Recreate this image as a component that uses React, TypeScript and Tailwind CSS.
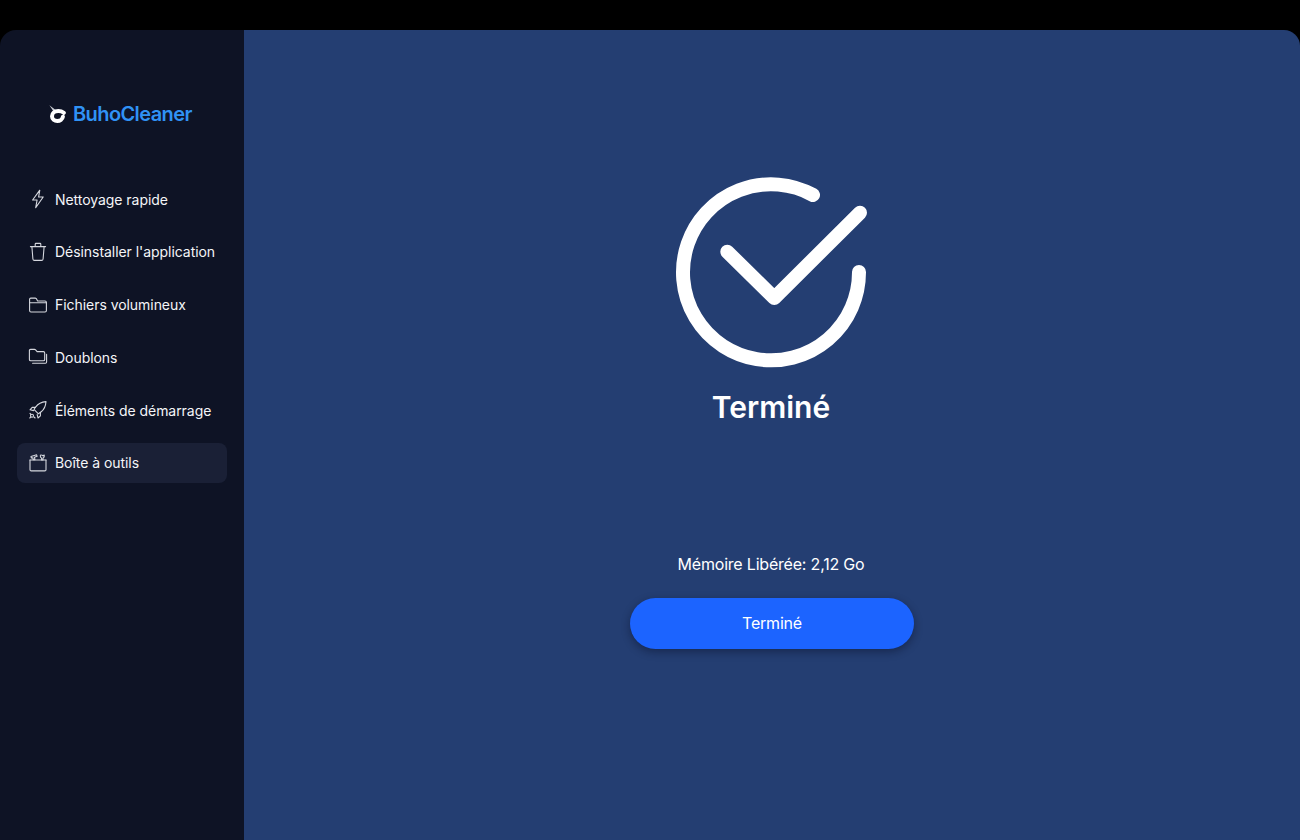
import React from 'react';

const iconProps = {
  width: 20,
  height: 20,
  viewBox: '0 0 20 20',
  fill: 'none',
  stroke: '#d5d7de',
  strokeWidth: 1.1,
  strokeLinecap: 'round' as const,
  strokeLinejoin: 'round' as const,
};

const BoltIcon = () => (
  <svg {...iconProps}>
    <path d="M11.800 1.200 4.600 11h4.500l-1.400 7.600L15.200 8h-4.600l1.200-6.800Z" />
  </svg>
);

const TrashIcon = () => (
  <svg {...iconProps}>
    <path d="M2.400 4.600h15.200" />
    <path d="M7.200 4.400V2.200c0-.5.3-.8.8-.8h4c.5 0 .8.3.8.8v2.200" />
    <path d="m3.900 4.800 1 12.200c.1.800.6 1.400 1.500 1.400h7.200c.9 0 1.400-.6 1.500-1.400l1-12.200" />
  </svg>
);

const FolderIcon = () => (
  <svg {...iconProps}>
    <path d="M1.600 5.500V4.300c0-.7.5-1.200 1.200-1.200h4.400c.5 0 .8.200 1.100.5l1.300 2.400H17c.8 0 1.400.6 1.400 1.400v8.200c0 .8-.6 1.400-1.400 1.400H3c-.8 0-1.400-.6-1.400-1.400V5.500Z" />
    <path d="M1.600 7.800h16.800" />
  </svg>
);

const DuplicateIcon = () => (
  <svg {...iconProps}>
    <path d="M1.400 3.600c0-.8.5-1.200 1.200-1.200h3.900c.5 0 .8.200 1.100.5l1.500 1.700h6.300c.8 0 1.300.5 1.300 1.300v6.500c0 .8-.5 1.300-1.300 1.300H2.700c-.8 0-1.300-.5-1.300-1.300V3.600Z" />
    <path d="M18.600 7.400v7.600c0 .8-.4 1.200-1.200 1.200H4.600" />
  </svg>
);

const RocketIcon = () => (
  <svg {...iconProps}>
    <path d="M18 1.600c-4.800.4-8 2.200-10.200 5.200L6 9.400l4.400 4.400 2.800-2C16 9.600 17.600 6.400 18 1.600Z" />
    <path d="M7.400 7.400H4.200L2 9.800l3.600.8" />
    <path d="M12.400 12.400v3.400L10 18l-.8-3.400" />
    <circle cx="4" cy="15.800" r="1.500" />
    <path d="m2 13.400 1 1.200M6 17l1.100 1M1.800 18l1.100-1.100" />
  </svg>
);

const ToolboxIcon = () => (
  <svg {...iconProps}>
    <path d="M2 7v9.700c0 .8.500 1.200 1.200 1.200h13.600c.7 0 1.200-.4 1.200-1.200V7" />
    <path d="M2 7h16" />
    <path d="M3 3.500 8.600 1.800l.5 1.500-2.600.9.400 2.600H5.200l-.3-2.100-1.500.3L3 3.500Z" />
    <path d="M12.400 2v1.600c0 .8.600 1.300 1.200 1.400V7h1.400V5c.7-.1 1.200-.6 1.200-1.400V2l-1.200.9-1.400-.9" />
  </svg>
);

const BuhoLogo = () => (
  <svg width="17" height="19" viewBox="0 0 17 19" fill="none" className="mt-[1px]">
    <path d="M0.400 0.200 7 5.200 4.600 6.500 0.400 0.200Z" fill="#c9ccd3" />
    <path d="M14.800 7.800C13.400 6.700 11.600 6 9.300 6 5.500 6 3 8.300 3 11.300 3 14.200 5.500 16 8.300 16 11 16 13.500 14.400 13.900 11.800" stroke="#ffffff" strokeWidth="4" strokeLinecap="round" />
  </svg>
);

const navItems = [
  { label: 'Nettoyage rapide', icon: <BoltIcon /> },
  { label: "Désinstaller l'application", icon: <TrashIcon /> },
  { label: 'Fichiers volumineux', icon: <FolderIcon /> },
  { label: 'Doublons', icon: <DuplicateIcon /> },
  { label: 'Éléments de démarrage', icon: <RocketIcon /> },
  { label: 'Boîte à outils', icon: <ToolboxIcon />, active: true },
];

export default function App() {
  return (
    <div className="h-[840px] w-[1300px] overflow-hidden bg-black pt-[30px] font-['Inter',sans-serif] text-white">
      <div className="flex h-[810px] overflow-hidden rounded-t-[16px]">
        <aside className="flex w-[244px] shrink-0 flex-col bg-[#0e1325] px-[17px]">
          <div className="mt-[72px] ml-[32px] flex h-6 items-center gap-[7px]">
            <BuhoLogo />
            <span className="text-[20px] leading-6 font-semibold tracking-[-0.6px] text-[#3092f5]">BuhoCleaner</span>
          </div>
          <nav className="mt-[53px] flex flex-col gap-[12.8px]">
            {navItems.map(item => (
              <div
                key={item.label}
                className={
                  item.active
                    ? 'flex h-10 w-[210px] items-center gap-[7px] rounded-lg bg-[#1a2036] pl-[11px]'
                    : 'flex h-10 w-[210px] items-center gap-[7px] rounded-lg pl-[11px]'
                }
              >
                {item.icon}
                <span className="pt-[1px] text-[14px] leading-5 font-normal tracking-[-0.05px] whitespace-nowrap text-[#f4f5f8]">
                  {item.label}
                </span>
              </div>
            ))}
          </nav>
        </aside>
        <main className="flex flex-1 flex-col items-center bg-[#243e72] pt-[142px]">
          <svg width="200" height="200" viewBox="0 0 200 200" fill="none" className="-ml-[2px]">
            <path d="M142 23A88 88 0 1 0 188 100" stroke="#ffffff" strokeWidth="14" strokeLinecap="round" />
            <path
              d="M56.300 79.700 103.300 126 189 40.700"
              stroke="#ffffff"
              strokeWidth="14"
              strokeLinecap="round"
              strokeLinejoin="round"
            />
          </svg>
          <h1 className="-ml-[2px] mt-[15px] text-[30px] leading-10 font-semibold">Terminé</h1>
          <p className="-ml-[2px] mt-[125px] text-[16px] leading-6 tracking-[-0.2px] text-white">Mémoire Libérée: 2,12 Go</p>
          <button className="mt-[22px] h-[51px] w-[284px] rounded-full bg-[#1c64ff] pb-[2px] text-[16px] font-normal tracking-[-0.2px] shadow-[0_3px_8px_rgba(8,16,40,0.45)]">
            Terminé
          </button>
        </main>
      </div>
    </div>
  );
}
